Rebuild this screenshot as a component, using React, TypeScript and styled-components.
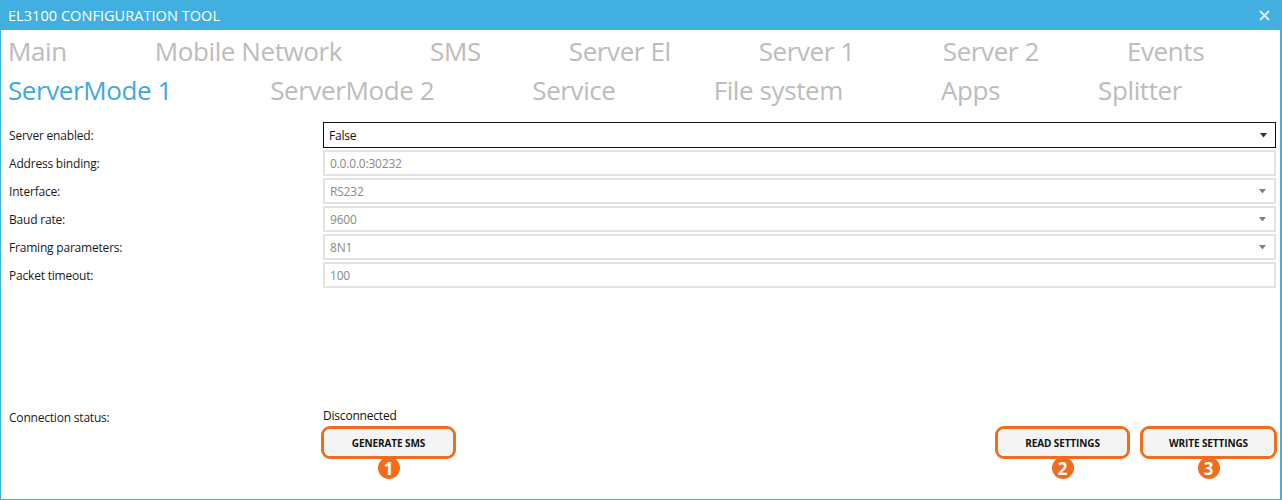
import styled, { createGlobalStyle } from "styled-components";

const GlobalStyle = createGlobalStyle`
    html, body {
        margin: 0;
        padding: 0;
        background: #ffffff;
    }
    body {
        font-family: "Open Sans", "Noto Sans", sans-serif;
    }
`;

type Field = {
    label: string;
    value: string;
    dropdown?: boolean;
    focused?: boolean;
};

const tabRows: string[][] = [
    ["Main", "Mobile Network", "SMS", "Server El", "Server 1", "Server 2", "Events"],
    ["ServerMode 1", "ServerMode 2", "Service", "File system", "Apps", "Splitter"],
];

const activeTab = "ServerMode 1";

const fields: Field[] = [
    { label: "Server enabled:", value: "False", dropdown: true, focused: true },
    { label: "Address binding:", value: "0.0.0.0:30232" },
    { label: "Interface:", value: "RS232", dropdown: true },
    { label: "Baud rate:", value: "9600", dropdown: true },
    { label: "Framing parameters:", value: "8N1", dropdown: true },
    { label: "Packet timeout:", value: "100" },
];

const CloseIcon = () => (
    <svg width="11" height="11" viewBox="0 0 11 11">
        <path d="M1 1 L10 10 M10 1 L1 10" stroke="#d8eef9" strokeWidth="1.8" />
    </svg>
);

const Arrow = ({ $dark }: { $dark?: boolean }) => (
    <svg width="7" height="5" viewBox="0 0 7 5">
        <path d="M0 0 H7 L3.5 4.5 Z" fill={$dark ? "#333" : "#808080"} />
    </svg>
);

export default function App() {
    return (
        <>
            <GlobalStyle />
            <Window>
                <TitleBar>
                    <Title>EL3100 CONFIGURATION TOOL</Title>
                    <CloseButton>
                        <CloseIcon />
                    </CloseButton>
                </TitleBar>

                <TabStrip>
                    {tabRows.map((row, i) => (
                        <TabRow key={i}>
                            {row.map((tab) => (
                                <Tab key={tab} $active={tab === activeTab}>
                                    {tab}
                                </Tab>
                            ))}
                        </TabRow>
                    ))}
                </TabStrip>

                <Form>
                    {fields.map((f) => (
                        <FormRow key={f.label}>
                            <Label>{f.label}</Label>
                            <Input $focused={f.focused}>
                                <span>{f.value}</span>
                                {f.dropdown && <Arrow $dark={f.focused} />}
                            </Input>
                        </FormRow>
                    ))}
                </Form>

                <Spacer />

                <Footer>
                    <Label>Connection status:</Label>
                    <FooterRight>
                        <Status>Disconnected</Status>
                        <ButtonRow>
                            <Highlight>
                                <Button>GENERATE SMS</Button>
                                <Badge>1</Badge>
                            </Highlight>
                            <ButtonGroup>
                                <Highlight>
                                    <Button>READ SETTINGS</Button>
                                    <Badge>2</Badge>
                                </Highlight>
                                <Highlight>
                                    <Button $wide>WRITE SETTINGS</Button>
                                    <Badge>3</Badge>
                                </Highlight>
                            </ButtonGroup>
                        </ButtonRow>
                    </FooterRight>
                </Footer>
            </Window>
        </>
    );
}

const Window = styled.div`
    width: 1282px;
    height: 500px;
    box-sizing: border-box;
    border: 1px solid #41b0e1;
    border-top: none;
    border-right: 2px solid #41b0e1;
    display: flex;
    flex-direction: column;
    background: #ffffff;
    overflow: hidden;
`;

const TitleBar = styled.div`
    height: 30px;
    flex: none;
    background: #41b0e1;
    display: flex;
    align-items: center;
    justify-content: space-between;
    padding: 0 12px 0 8px;
    margin: 0 -2px 0 -1px;
`;

const Title = styled.div`
    color: #ffffff;
    font-size: 14.5px;
    letter-spacing: 0.05px;
`;

const CloseButton = styled.div`
    display: flex;
    align-items: center;
`;

const TabStrip = styled.div`
    display: flex;
    flex-direction: column;
    padding: 1px 0 0 7px;
`;

const TabRow = styled.div`
    display: flex;
    height: 39px;
    align-items: center;
`;

const Tab = styled.div<{ $active?: boolean }>`
    flex: 1 1 auto;
    padding-right: 88px;
    font-size: 26px;
    letter-spacing: -0.4px;
    white-space: nowrap;
    color: ${({ $active }) => ($active ? "#41a8dd" : "#bcbcbc")};
`;

const Form = styled.div`
    display: flex;
    flex-direction: column;
    row-gap: 2px;
    padding: 13px 4px 0 8px;
`;

const FormRow = styled.div`
    display: grid;
    grid-template-columns: 314px 1fr;
    align-items: center;
`;

const Label = styled.div`
    font-size: 12px;
    color: #1a1a1a;
    letter-spacing: -0.2px;
`;

const Input = styled.div<{ $focused?: boolean }>`
    height: 26px;
    box-sizing: border-box;
    display: flex;
    align-items: center;
    justify-content: space-between;
    padding: 0 8px 0 5px;
    font-size: 12px;
    letter-spacing: -0.2px;
    color: ${({ $focused }) => ($focused ? "#111" : "#8a8a8a")};
    border: ${({ $focused }) => ($focused ? "1px solid #111" : "2px solid #e3e3e3")};
`;

const Spacer = styled.div`
    flex: 1;
`;

const Footer = styled.div`
    display: grid;
    grid-template-columns: 312px 1fr;
    padding: 0 3px 18px 8px;
`;

const FooterRight = styled.div`
    display: flex;
    flex-direction: column;
`;

const Status = styled.div`
    font-size: 12px;
    letter-spacing: -0.2px;
    color: #111;
    padding-left: 2px;
    height: 17px;
    line-height: 13px;
`;

const ButtonRow = styled.div`
    display: flex;
    justify-content: space-between;
`;

const ButtonGroup = styled.div`
    display: flex;
    column-gap: 10px;
`;

const Highlight = styled.div`
    position: relative;
    display: flex;
    border: 3px solid #f36c1c;
    border-radius: 9px;
    margin-bottom: 22px;
`;

const Button = styled.div<{ $wide?: boolean }>`
    width: ${({ $wide }) => ($wide ? "131px" : "129px")};
    height: 27px;
    background: #f4f4f4;
    border-radius: 6px;
    display: flex;
    align-items: center;
    justify-content: center;
    font-size: 10px;
    font-weight: 700;
    color: #111;
    letter-spacing: -0.1px;
`;

const Badge = styled.div`
    position: absolute;
    left: 50%;
    bottom: -23px;
    transform: translateX(-50%);
    width: 22px;
    height: 22px;
    border-radius: 50%;
    background: #f36c1c;
    color: #ffffff;
    font-size: 17px;
    font-weight: 700;
    display: flex;
    align-items: center;
    justify-content: center;
    line-height: 1;
`;
